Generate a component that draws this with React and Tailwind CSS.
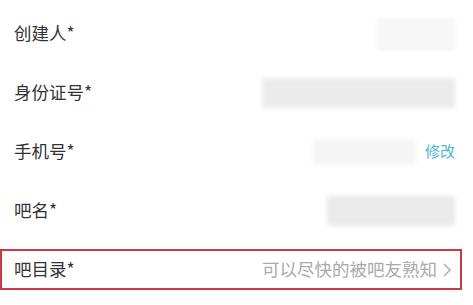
const font = { fontFamily: '"Noto Sans CJK SC", "Noto Sans", sans-serif' };

function Row({ label, children }) {
  return (
    <div className="flex h-[59px] items-center justify-between pl-[14px] pr-[18px]">
      <span className="text-[17.5px] text-[#333333]">{label}*</span>
      <div className="flex items-center">{children}</div>
    </div>
  );
}

export default function App() {
  return (
    <div className="w-[473px] h-[305px] bg-white pt-[4px] overflow-hidden" style={font}>
      <Row label="创建人">
        <div className="w-[78px] h-[32px] bg-[#f6f6f6] blur-[2px]" />
      </Row>
      <Row label="身份证号">
        <div className="w-[193px] h-[30px] bg-[#ebebeb] blur-[2px]" />
      </Row>
      <Row label="手机号">
        <div className="w-[103px] h-[26px] bg-[#f5f5f5] blur-[2px]" />
        <span className="ml-[9px] text-[15px] text-[#4fb5d2]">修改</span>
      </Row>
      <Row label="吧名">
        <div className="w-[128px] h-[30px] bg-[#eaeaea] blur-[2px]" />
      </Row>
      <div className="flex h-[59px] items-center">
        <div className="flex h-[41px] w-[462px] items-center justify-between border-2 border-[#cb3a44] pl-[12px] pr-[8px]">
          <span className="text-[17.5px] text-[#333333]">吧目录*</span>
          <div className="flex items-center text-[#aaaaaa]">
            <span className="text-[17.5px]">可以尽快的被吧友熟知</span>
            <svg width="10" height="16" viewBox="0 0 10 16" className="ml-[5px]">
              <path d="M2 2l6 6-6 6" fill="none" stroke="#b0b0b0" strokeWidth="1.5" />
            </svg>
          </div>
        </div>
      </div>
    </div>
  );
}
